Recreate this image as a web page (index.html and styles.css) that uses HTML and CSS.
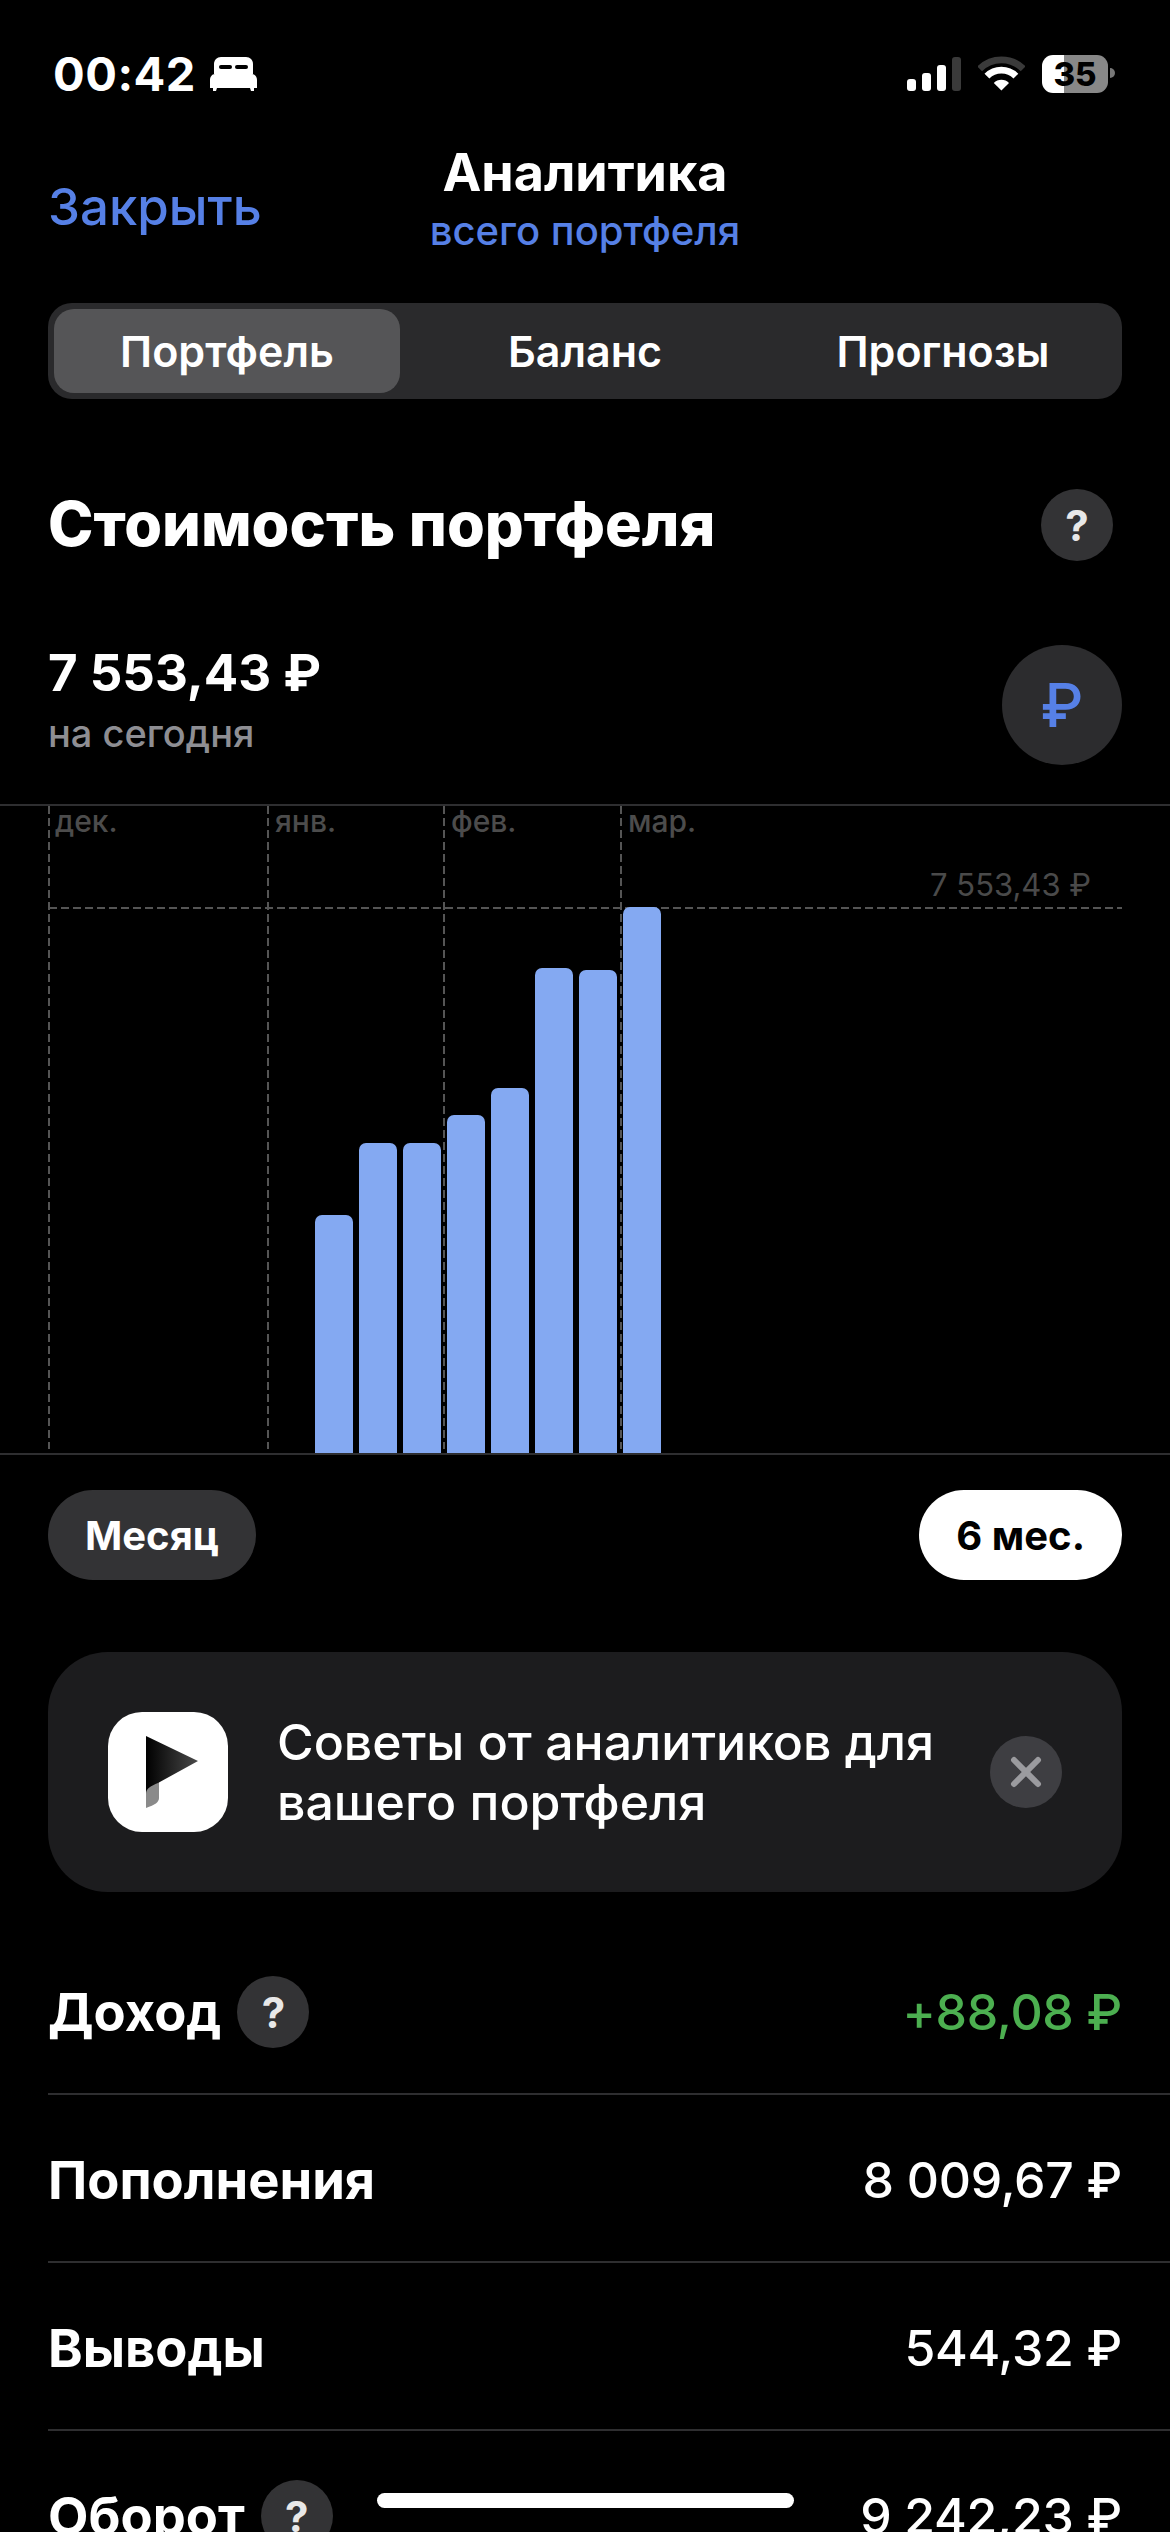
FILE: index.html
```html
<!DOCTYPE html>
<html lang="ru">
<head>
    <meta charset="UTF-8">
    <title>Аналитика</title>
    <link rel="stylesheet" href="styles.css">
</head>
<body>
    <div class="screen">
        <div class="status">
            <div class="status-left">
                <span class="time">00:42</span>
                <svg class="bed" width="47" height="34" viewBox="0 0 47 34">
                    <path fill="#fff" d="M4 17V7c0-4 3-7 7-7h25c4 0 7 3 7 7v10z"/>
                    <rect x="9" y="8" width="13" height="4" rx="2" fill="#000"/>
                    <rect x="25" y="8" width="13" height="4" rx="2" fill="#000"/>
                    <path fill="#fff" d="M0 23c0-3 2-6 5-6h37c3 0 5 3 5 6v8H44v3h-3l-1-3H7l-1 3H3v-3H0z"/>
                </svg>
            </div>
            <div class="status-right">
                <div class="signal">
                    <span class="signal-bar bar1"></span>
                    <span class="signal-bar bar2"></span>
                    <span class="signal-bar bar3"></span>
                    <span class="signal-bar bar4"></span>
                </div>
                <svg class="wifi" width="48" height="36" viewBox="0 0 48 36" fill="none">
                    <path stroke="#3a3a3a" stroke-width="7" d="M1.7 12.7A31.5 31.5 0 0 1 46.3 12.7"/>
                    <path stroke="#fff" stroke-width="7" d="M9.15 20.15A21 21 0 0 1 38.85 20.15"/>
                    <path fill="#fff" d="M24 35L16.2 27.2A11 11 0 0 1 31.8 27.2Z"/>
                </svg>
                <div class="battery">35</div>
                <span class="battery-nub"></span>
            </div>
        </div>

        <div class="nav">
            <a class="nav-close">Закрыть</a>
            <div class="nav-title">
                <div class="nav-heading">Аналитика</div>
                <div class="nav-sub">всего портфеля</div>
            </div>
        </div>

        <div class="tabs">
            <div class="tab active"><span>Портфель</span></div>
            <div class="tab"><span>Баланс</span></div>
            <div class="tab"><span>Прогнозы</span></div>
        </div>

        <div class="heading-row">
            <h1>Стоимость портфеля</h1>
            <span class="help">?</span>
        </div>

        <div class="summary">
            <div class="summary-text">
                <div class="summary-value">7 553,43 ₽</div>
                <div class="summary-label">на сегодня</div>
            </div>
            <div class="currency">₽</div>
        </div>

        <div class="chart">
            <svg class="chart-grid" width="1170" height="643" fill="none" stroke="#555" stroke-width="2" stroke-dasharray="8 4">
                <path d="M49 0V643"/>
                <path d="M268 0V643"/>
                <path d="M444 0V643"/>
                <path d="M621 0V643"/>
                <path d="M49 102H1122"/>
            </svg>
            <span class="month m1">дек.</span>
            <span class="month m2">янв.</span>
            <span class="month m3">фев.</span>
            <span class="month m4">мар.</span>
            <span class="chart-max">7 553,43 ₽</span>
            <div class="bars">
                <div class="bar" style="height: 238px"></div>
                <div class="bar" style="height: 310px"></div>
                <div class="bar" style="height: 310px"></div>
                <div class="bar" style="height: 338px"></div>
                <div class="bar" style="height: 365px"></div>
                <div class="bar" style="height: 485px"></div>
                <div class="bar" style="height: 483px"></div>
                <div class="bar" style="height: 546px"></div>
            </div>
        </div>

        <div class="periods">
            <div class="period">Месяц</div>
            <div class="period selected">6 мес.</div>
        </div>

        <div class="promo">
            <div class="promo-icon">
                <svg width="120" height="120" viewBox="0 0 120 120">
                    <defs>
                        <linearGradient id="flag" x1="0" y1="0" x2="1" y2="0">
                            <stop offset="0" stop-color="#000"/>
                            <stop offset="1" stop-color="#4a4a4a"/>
                        </linearGradient>
                    </defs>
                    <path fill="#8a8a8a" d="M38 76L51 68V86C51 90 47 93 38 96Z"/>
                    <path fill="url(#flag)" d="M38 24L90 49L50 71C43 74 38 76 38 82Z"/>
                </svg>
            </div>
            <div class="promo-text">Советы от аналитиков для вашего портфеля</div>
            <div class="promo-close">
                <svg width="36" height="36" viewBox="0 0 36 36" fill="none" stroke="#9b9b9f" stroke-width="6" stroke-linecap="round">
                    <path d="M6 6L30 30"/>
                    <path d="M30 6L6 30"/>
                </svg>
            </div>
        </div>

        <div class="rows">
            <div class="row">
                <div class="row-label">Доход <span class="help">?</span></div>
                <div class="row-value income">+88,08 ₽</div>
            </div>
            <div class="row">
                <div class="row-label">Пополнения</div>
                <div class="row-value">8 009,67 ₽</div>
            </div>
            <div class="row">
                <div class="row-label">Выводы</div>
                <div class="row-value">544,32 ₽</div>
            </div>
            <div class="row">
                <div class="row-label">Оборот <span class="help">?</span></div>
                <div class="row-value">9 242,23 ₽</div>
            </div>
        </div>

        <div class="home-bar"></div>
    </div>
</body>
</html>
```

FILE: styles.css
```css
:root {
    --blue: #5680e6;
    --panel: #2a2a2c;
    --line: #2e2e30;
}

html, body {
    margin: 0;
    padding: 0;
    background: #000;
    color: #fff;
    font-family: Inter, "Noto Sans", sans-serif;
}

.screen {
    position: relative;
    width: 1170px;
    height: 2532px;
    overflow: hidden;
    background: #000;
}

/* status bar */
.status {
    height: 130px;
    padding: 54px 48px 0 53px;
    box-sizing: border-box;
    display: flex;
    justify-content: space-between;
    align-items: flex-start;
}

.status-left {
    display: flex;
    align-items: center;
    gap: 14px;
    height: 40px;
}

.time {
    font-size: 47px;
    font-weight: 700;
    line-height: 40px;
    letter-spacing: 0.5px;
}

.status-right {
    display: flex;
    align-items: flex-start;
    width: 208px;
    height: 40px;
    margin-right: 7px;
}

.signal {
    display: flex;
    align-items: flex-end;
    gap: 6px;
    height: 34px;
    margin-top: 3px;
}

.signal-bar {
    width: 9px;
    border-radius: 3px;
    background: #fff;
}

.bar1 { height: 12px; }
.bar2 { height: 18px; }
.bar3 { height: 26px; }
.bar4 { height: 34px; background: #3a3a3a; }

.wifi {
    margin: 2px 0 0 17px;
}

.battery {
    width: 68px;
    height: 38px;
    margin: 1px 0 0 17px;
    border-radius: 11px;
    background: linear-gradient(to right, #fff 34%, #888 34%);
    color: #000;
    font-size: 33px;
    font-weight: 800;
    line-height: 38px;
    text-align: center;
}

.battery-nub {
    width: 5px;
    height: 10px;
    margin: 14px 0 0 2px;
    border-radius: 0 5px 5px 0;
    background: #777;
}

/* nav */
.nav {
    height: 173px;
    padding: 0 48px;
    position: relative;
    display: flex;
    align-items: flex-start;
}

.nav-close {
    margin-top: 47px;
    font-size: 51px;
    font-weight: 500;
    line-height: 60px;
    color: var(--blue);
}

.nav-title {
    position: absolute;
    top: 14px;
    left: 0;
    right: 0;
    text-align: center;
}

.nav-heading {
    font-size: 52px;
    font-weight: 700;
    line-height: 58px;
}

.nav-sub {
    margin-top: 6px;
    font-size: 40px;
    font-weight: 500;
    line-height: 46px;
    color: var(--blue);
}

/* tabs */
.tabs {
    margin: 0 48px;
    height: 96px;
    display: grid;
    grid-template-columns: repeat(3, 1fr);
    border-radius: 24px;
    background: var(--panel);
}

.tab {
    display: flex;
    align-items: center;
    justify-content: center;
    font-size: 43px;
    font-weight: 600;
}

.tab.active {
    margin: 6px;
    border-radius: 20px;
    background: #555557;
}

/* heading */
.heading-row {
    margin: 90px 57px 0 48px;
    height: 72px;
    display: flex;
    align-items: center;
    justify-content: space-between;
}

h1 {
    margin: -2px 0 0;
    font-size: 61.2px;
    font-weight: 800;
}

.help {
    width: 72px;
    height: 72px;
    flex: none;
    display: inline-flex;
    align-items: center;
    justify-content: center;
    border-radius: 50%;
    background: #333335;
    color: #e8e8e8;
    font-size: 42px;
    font-weight: 700;
}

.summary {
    margin: 84px 48px 0;
    height: 120px;
    display: flex;
    align-items: flex-start;
    justify-content: space-between;
}

.summary-text {
    margin-top: -2px;
}

.summary-value {
    font-size: 51px;
    font-weight: 700;
    line-height: 60px;
}

.summary-label {
    margin-top: 7px;
    font-size: 38px;
    font-weight: 500;
    line-height: 46px;
    color: #8e8e93;
}

.currency {
    width: 120px;
    height: 120px;
    display: flex;
    align-items: center;
    justify-content: center;
    border-radius: 50%;
    background: #2c2c2e;
    color: var(--blue);
    font-size: 60px;
    font-weight: 500;
}

/* chart */
.chart {
    position: relative;
    margin-top: 39px;
    height: 651px;
    box-sizing: border-box;
    border-top: 2px solid var(--line);
    border-bottom: 2px solid var(--line);
}

.chart-grid {
    position: absolute;
    top: 0;
    left: 0;
}

.month {
    position: absolute;
    top: -3px;
    font-size: 30px;
    line-height: 36px;
    font-weight: 500;
    color: #4c4c4c;
}

.m1 { left: 55px; }
.m2 { left: 275px; }
.m3 { left: 451px; }
.m4 { left: 628px; }

.chart-max {
    position: absolute;
    top: 60px;
    right: 79px;
    font-size: 31px;
    line-height: 38px;
    color: #4a4a4a;
}

.bars {
    position: absolute;
    left: 315px;
    bottom: 0;
    display: flex;
    align-items: flex-end;
    gap: 6px;
}

.bar {
    width: 38px;
    border-radius: 7px 7px 0 0;
    background: #84a9f2;
}

/* periods */
.periods {
    margin: 35px 48px 0;
    display: flex;
    justify-content: space-between;
}

.period {
    height: 90px;
    padding: 0 37px;
    display: flex;
    align-items: center;
    border-radius: 45px;
    background: #333335;
    font-size: 40px;
    font-weight: 700;
}

.period.selected {
    background: #fff;
    color: #000;
}

/* promo card */
.promo {
    margin: 72px 48px 0;
    height: 240px;
    padding: 0 60px;
    box-sizing: border-box;
    display: flex;
    align-items: center;
    border-radius: 60px;
    background: #1c1c1e;
}

.promo-icon {
    width: 120px;
    height: 120px;
    flex: none;
    border-radius: 34px;
    background: #fff;
}

.promo-text {
    margin-left: 49px;
    flex: 1;
    font-size: 50px;
    font-weight: 500;
    line-height: 60px;
}

.promo-close {
    width: 72px;
    height: 72px;
    flex: none;
    display: flex;
    align-items: center;
    justify-content: center;
    border-radius: 50%;
    background: #3e3e42;
}

/* rows */
.rows {
    margin: 35px 0 0 48px;
}

.row {
    height: 168px;
    padding: 4px 48px 0 0;
    box-sizing: border-box;
    display: flex;
    align-items: center;
    justify-content: space-between;
    border-bottom: 2px solid var(--line);
}

.row-label {
    display: flex;
    align-items: center;
    gap: 16px;
    font-size: 52.5px;
    font-weight: 700;
}

.row-value {
    font-size: 50px;
    font-weight: 500;
    letter-spacing: -0.3px;
}

.income {
    color: #4caf50;
}

.home-bar {
    position: absolute;
    left: 377px;
    top: 2493px;
    width: 417px;
    height: 15px;
    border-radius: 8px;
    background: #fff;
}
```
